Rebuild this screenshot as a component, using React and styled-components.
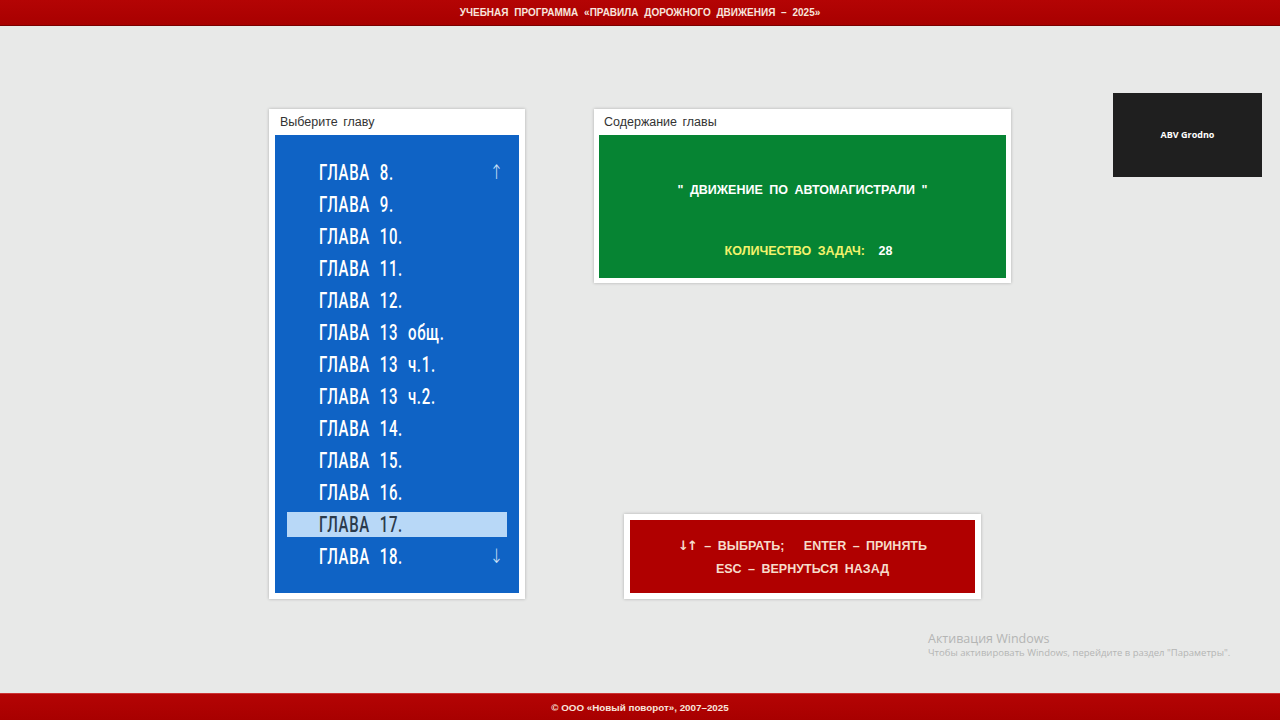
import React from "react";
import styled, { createGlobalStyle } from "styled-components";

const Global = createGlobalStyle`
  html, body {
    margin: 0;
    padding: 0;
    background: #e8e9e8;
  }
  body {
    font-family: "Liberation Sans", Arial, sans-serif;
  }
`;

const Page = styled.div`
  position: relative;
  width: 1280px;
  height: 720px;
  display: flex;
  flex-direction: column;
  background: #e8e9e8;
  overflow: hidden;
`;

const Bar = styled.div`
  height: ${({ h }) => h}px;
  box-sizing: border-box;
  flex: none;
  display: flex;
  align-items: center;
  justify-content: center;
  background: linear-gradient(#b40404, #a80000);
  border-top: ${({ top }) => (top ? "1px solid #c33" : "none")};
  border-bottom: ${({ top }) => (top ? "none" : "1px solid #7a0000")};
  color: #f8e4dc;
  font-weight: bold;
  font-size: ${({ fs }) => fs}px;
  word-spacing: ${({ ws }) => ws}px;
`;

const Main = styled.main`
  flex: 1;
  display: flex;
  align-items: flex-start;
  padding: 83px 0 0 269px;
  gap: 69px;
`;

const Card = styled.section`
  background: #fff;
  box-shadow: 0 0 3px rgba(0, 0, 0, 0.25);
  padding: 0 ${({ pad }) => pad}px ${({ pad }) => pad}px;
  display: flex;
  flex-direction: column;
  box-sizing: border-box;
  width: ${({ w }) => w}px;
`;

const CardTitle = styled.div`
  height: 26px;
  display: flex;
  align-items: center;
  padding-left: 5px;
  font-size: 12.5px;
  color: #333;
  word-spacing: 2px;
`;

const List = styled.ul`
  list-style: none;
  margin: 0;
  padding: 21px 12px 21px;
  background: #0f63c5;
  height: 458px;
  box-sizing: border-box;
`;

const Item = styled.li`
  position: relative;
  height: 32px;
  display: flex;
  align-items: center;
`;

const ItemLabel = styled.span`
  display: flex;
  align-items: center;
  width: 100%;
  height: 25px;
  padding-left: 32px;
  box-sizing: border-box;
  background: ${({ active }) => (active ? "#b8d8f7" : "transparent")};
  color: ${({ active }) => (active ? "#2b3b4c" : "#fff")};
`;

const Narrow = styled.span`
  display: inline-block;
  font-family: Roboto, "Liberation Sans", sans-serif;
  font-weight: 500;
  font-size: 22px;
  line-height: 1;
  letter-spacing: 1px;
  word-spacing: 8px;
  white-space: nowrap;
  transform: translateY(1px) scaleX(0.68);
  transform-origin: left center;
`;

const Arrow = styled.span`
  position: absolute;
  right: 2px;
  top: 50%;
  transform: translateY(-50%) scaleX(0.8);
  color: #cfe2f7;
  font-size: 20px;
  font-family: "DejaVu Sans", sans-serif;
  font-weight: 200;
`;

const Right = styled.div`
  height: 490px;
  width: 417px;
  display: flex;
  flex-direction: column;
  justify-content: space-between;
  align-items: center;
`;

const GreenBox = styled.div`
  height: 143px;
  background: #068433;
  display: flex;
  flex-direction: column;
  align-items: center;
  justify-content: space-between;
  padding: 48px 0 20px;
  box-sizing: border-box;
  font-weight: bold;
  font-size: 12.5px;
  word-spacing: 3px;
  color: #fff;
`;

const Count = styled.div`
  color: #f3f26c;
  padding-left: 12px;

  b {
    color: #fff;
    margin-left: 7px;
  }
`;

const RedCard = styled.section`
  background: #fff;
  box-shadow: 0 0 3px rgba(0, 0, 0, 0.25);
  padding: 6px;
  width: 357px;
  box-sizing: border-box;
`;

const RedBox = styled.div`
  height: 73px;
  background: #b00000;
  display: flex;
  flex-direction: column;
  align-items: center;
  justify-content: center;
  gap: 9px;
  color: #f6dccb;
  font-weight: bold;
  font-size: 12.5px;
  word-spacing: 3px;
`;

const Keys = styled.span`
  font-family: "DejaVu Sans", sans-serif;
  font-size: 13px;
  letter-spacing: -2px;
  margin-right: 2px;
`;

const Cam = styled.div`
  position: absolute;
  left: 1113px;
  top: 93px;
  width: 149px;
  height: 84px;
  background: #1f1f1f;
  color: #fff;
  font-family: "Open Sans", sans-serif;
  font-weight: bold;
  font-size: 9px;
  display: flex;
  align-items: center;
  justify-content: center;
  padding-bottom: 2px;
  box-sizing: border-box;
`;

const Watermark = styled.div`
  position: absolute;
  left: 928px;
  top: 631px;
  color: #b4b5b4;
  font-family: "Open Sans", sans-serif;
  line-height: 1.2;

  div:first-child {
    font-size: 12.5px;
  }
  div:last-child {
    font-size: 9.5px;
    margin-top: 1px;
  }
`;

const chapters = [
  "ГЛАВА 8.",
  "ГЛАВА 9.",
  "ГЛАВА 10.",
  "ГЛАВА 11.",
  "ГЛАВА 12.",
  "ГЛАВА 13 общ.",
  "ГЛАВА 13 ч.1.",
  "ГЛАВА 13 ч.2.",
  "ГЛАВА 14.",
  "ГЛАВА 15.",
  "ГЛАВА 16.",
  "ГЛАВА 17.",
  "ГЛАВА 18.",
];

export default function App() {
  return (
    <Page>
      <Global />
      <Bar h={26} fs={10} ws={3}>
        УЧЕБНАЯ ПРОГРАММА «ПРАВИЛА ДОРОЖНОГО ДВИЖЕНИЯ – 2025»
      </Bar>
      <Main>
        <Card w={256} pad={6}>
          <CardTitle>Выберите главу</CardTitle>
          <List>
            {chapters.map((c, i) => (
              <Item key={c}>
                <ItemLabel active={c === "ГЛАВА 17."}>
                  <Narrow>{c}</Narrow>
                </ItemLabel>
                {i === 0 && <Arrow>↑</Arrow>}
                {i === chapters.length - 1 && <Arrow>↓</Arrow>}
              </Item>
            ))}
          </List>
        </Card>
        <Right>
          <Card w={417} pad={5}>
            <CardTitle>Содержание главы</CardTitle>
            <GreenBox>
              <div>" ДВИЖЕНИЕ ПО АВТОМАГИСТРАЛИ "</div>
              <Count>
                КОЛИЧЕСТВО ЗАДАЧ: <b>28</b>
              </Count>
            </GreenBox>
          </Card>
          <RedCard>
            <RedBox>
              <div>
                <Keys>↓↑</Keys> – ВЫБРАТЬ;&nbsp;&nbsp; ENTER – ПРИНЯТЬ
              </div>
              <div>ESC – ВЕРНУТЬСЯ НАЗАД</div>
            </RedBox>
          </RedCard>
        </Right>
      </Main>
      <Bar h={27} fs={9.8} ws={0} top>
        © ООО «Новый поворот», 2007–2025
      </Bar>
      <Cam>ABV Grodno</Cam>
      <Watermark>
        <div>Активация Windows</div>
        <div>Чтобы активировать Windows, перейдите в раздел "Параметры".</div>
      </Watermark>
    </Page>
  );
}
